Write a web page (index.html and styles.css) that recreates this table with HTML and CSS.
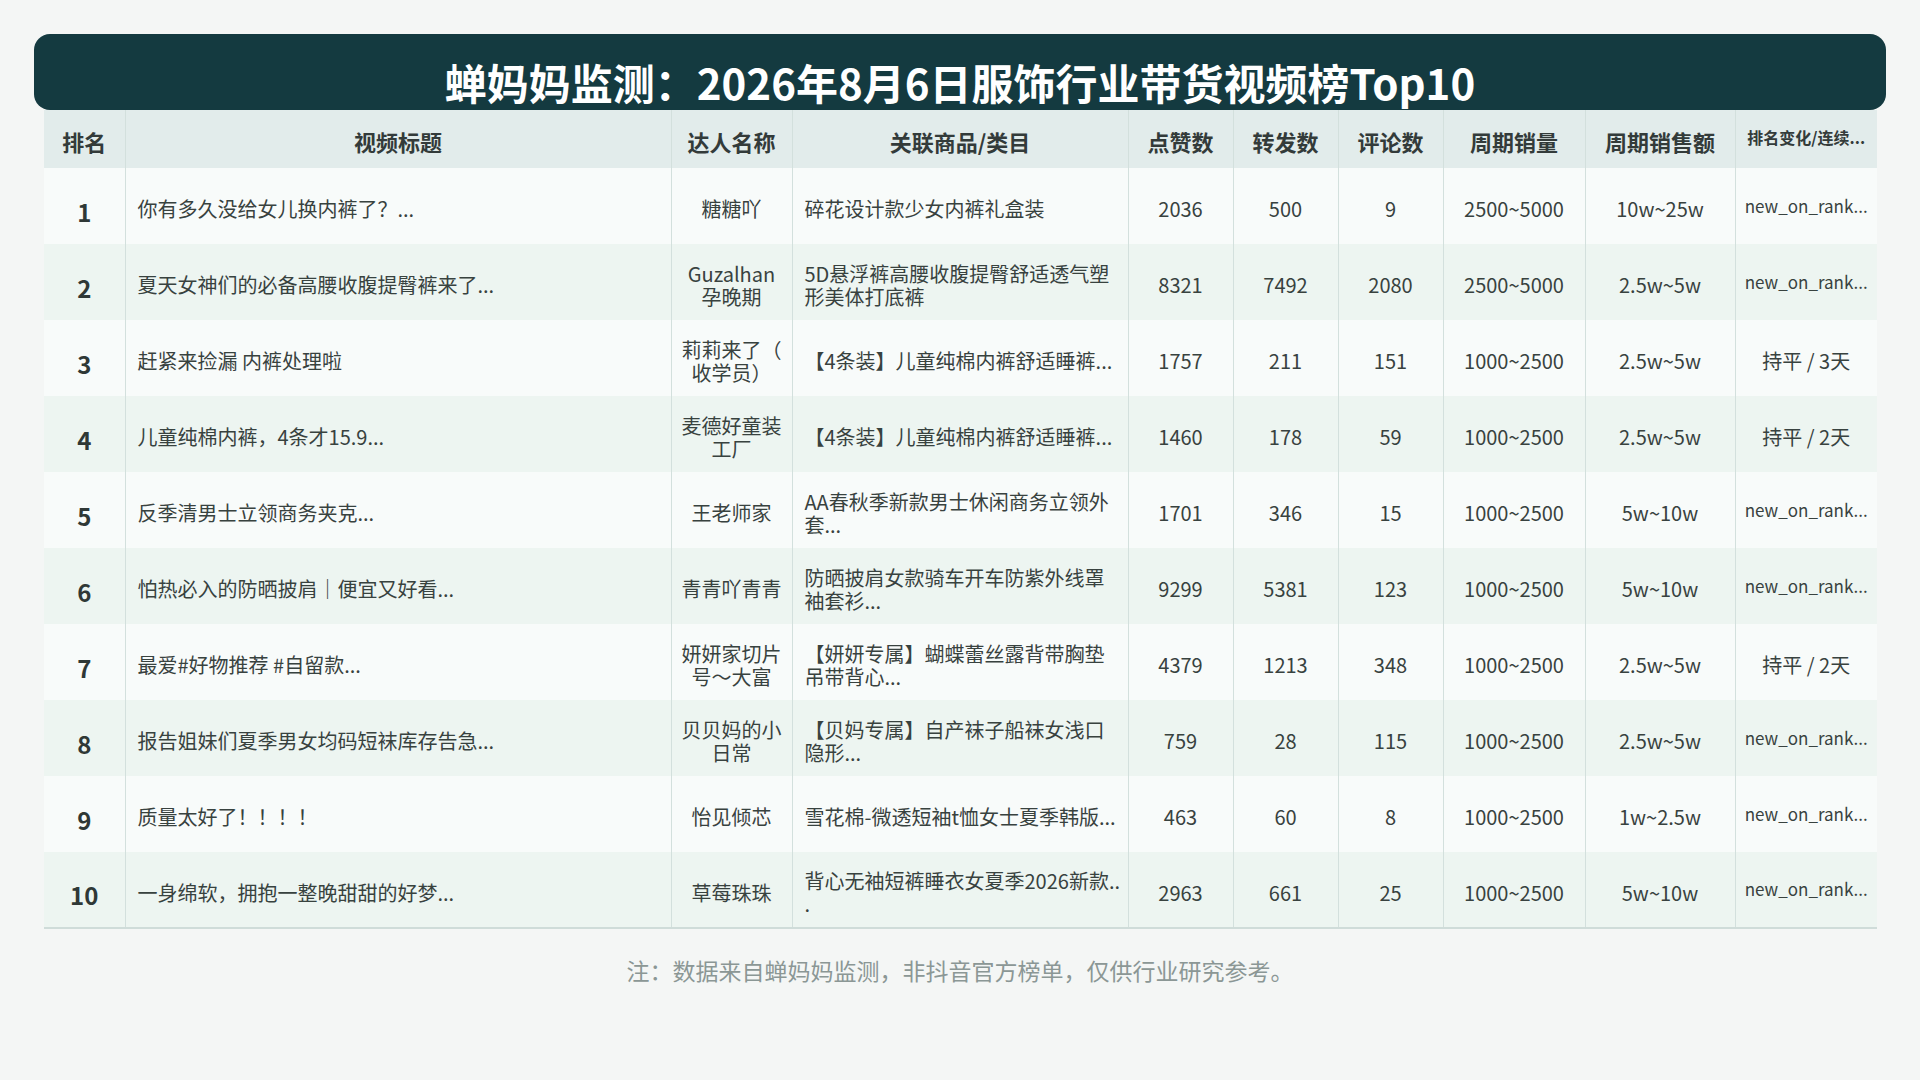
FILE: index.html
```html
<!DOCTYPE html>
<html lang="zh-CN">
<head>
<meta charset="utf-8">
<title>蝉妈妈监测：服饰行业带货视频榜Top10</title>
<link rel="stylesheet" href="styles.css">
</head>
<body>
<main class="page">
  <h1 class="title">蝉妈妈监测：2026年8月6日服饰行业带货视频榜Top10</h1>
  <table class="rank-table">
    <colgroup>
      <col class="c-rank"><col class="c-title"><col class="c-talent"><col class="c-goods">
      <col class="c-num"><col class="c-num"><col class="c-num"><col class="c-sales"><col class="c-amount"><col class="c-change">
    </colgroup>
    <thead>
      <tr>
        <th>排名</th><th>视频标题</th><th>达人名称</th><th>关联商品/类目</th><th>点赞数</th><th>转发数</th><th>评论数</th><th>周期销量</th><th>周期销售额</th><th class="th-small">排名变化/连续...</th>
      </tr>
    </thead>
    <tbody>
      <tr><td class="rank">1</td><td class="left">你有多久没给女儿换内裤了？...</td><td>糖糖吖</td><td class="left">碎花设计款少女内裤礼盒装</td><td>2036</td><td>500</td><td>9</td><td>2500~5000</td><td>10w~25w</td><td class="new">new_on_rank...</td></tr>
      <tr><td class="rank">2</td><td class="left">夏天女神们的必备高腰收腹提臀裤来了...</td><td>Guzalhan 孕晚期</td><td class="left">5D悬浮裤高腰收腹提臀舒适透气塑形美体打底裤</td><td>8321</td><td>7492</td><td>2080</td><td>2500~5000</td><td>2.5w~5w</td><td class="new">new_on_rank...</td></tr>
      <tr><td class="rank">3</td><td class="left">赶紧来捡漏 内裤处理啦</td><td>莉莉来了（收学员）</td><td class="left">【4条装】儿童纯棉内裤舒适睡裤...</td><td>1757</td><td>211</td><td>151</td><td>1000~2500</td><td>2.5w~5w</td><td>持平 / 3天</td></tr>
      <tr><td class="rank">4</td><td class="left">儿童纯棉内裤，4条才15.9...</td><td>麦德好童装工厂</td><td class="left">【4条装】儿童纯棉内裤舒适睡裤...</td><td>1460</td><td>178</td><td>59</td><td>1000~2500</td><td>2.5w~5w</td><td>持平 / 2天</td></tr>
      <tr><td class="rank">5</td><td class="left">反季清男士立领商务夹克...</td><td>王老师家</td><td class="left">AA春秋季新款男士休闲商务立领外套...</td><td>1701</td><td>346</td><td>15</td><td>1000~2500</td><td>5w~10w</td><td class="new">new_on_rank...</td></tr>
      <tr><td class="rank">6</td><td class="left">怕热必入的防晒披肩｜便宜又好看...</td><td>青青吖青青</td><td class="left">防晒披肩女款骑车开车防紫外线罩袖套衫...</td><td>9299</td><td>5381</td><td>123</td><td>1000~2500</td><td>5w~10w</td><td class="new">new_on_rank...</td></tr>
      <tr><td class="rank">7</td><td class="left">最爱#好物推荐 #自留款...</td><td>妍妍家切片号～大富</td><td class="left">【妍妍专属】蝴蝶蕾丝露背带胸垫吊带背心...</td><td>4379</td><td>1213</td><td>348</td><td>1000~2500</td><td>2.5w~5w</td><td>持平 / 2天</td></tr>
      <tr><td class="rank">8</td><td class="left">报告姐妹们夏季男女均码短袜库存告急...</td><td>贝贝妈的小日常</td><td class="left">【贝妈专属】自产袜子船袜女浅口隐形...</td><td>759</td><td>28</td><td>115</td><td>1000~2500</td><td>2.5w~5w</td><td class="new">new_on_rank...</td></tr>
      <tr><td class="rank">9</td><td class="left">质量太好了！！！！</td><td>怡见倾芯</td><td class="left">雪花棉-微透短袖t恤女士夏季韩版...</td><td>463</td><td>60</td><td>8</td><td>1000~2500</td><td>1w~2.5w</td><td class="new">new_on_rank...</td></tr>
      <tr><td class="rank">10</td><td class="left">一身绵软，拥抱一整晚甜甜的好梦...</td><td>草莓珠珠</td><td class="left">背心无袖短裤睡衣女夏季2026新款...</td><td>2963</td><td>661</td><td>25</td><td>1000~2500</td><td>5w~10w</td><td class="new">new_on_rank...</td></tr>
    </tbody>
  </table>
  <p class="note">注：数据来自蝉妈妈监测，非抖音官方榜单，仅供行业研究参考。</p>
</main>
</body>
</html>
```
FILE: styles.css
```css
html, body {
  margin: 0;
  padding: 0;
  background: #f4f6f5;
}
body {
  font-family: "Noto Sans CJK SC", "Noto Sans", sans-serif;
  color: #37413f;
}
.page {
  width: 1920px;
  height: 1080px;
  box-sizing: border-box;
  padding: 34px 34px 0;
}
.title {
  margin: 0;
  height: 76px;
  box-sizing: border-box;
  padding-top: 23px;
  background: #143a40;
  border-radius: 16px;
  color: #ffffff;
  font-size: 42px;
  font-weight: 700;
  line-height: 50px;
  text-align: center;
  white-space: nowrap;
}
.rank-table {
  margin: 0 10px;
  width: 1832px;
  table-layout: fixed;
  border-collapse: collapse;
  border-bottom: 2px solid #cfdcd9;
}
.c-rank { width: 81px; }
.c-title { width: 546px; }
.c-talent { width: 121px; }
.c-goods { width: 336px; }
.c-num { width: 105px; }
.c-sales { width: 142px; }
.c-amount { width: 150px; }
.c-change { width: 142px; }

.rank-table th,
.rank-table td {
  padding: 5px 10px 0;
  text-align: center;
  vertical-align: middle;
  border-left: 1px solid #d3e0dd;
  line-break: anywhere;
  overflow: hidden;
}
.rank-table th:first-child,
.rank-table td:first-child {
  border-left: none;
}
.rank-table thead tr {
  height: 58px;
  background: #e2eceb;
}
.rank-table th {
  font-size: 22px;
  font-weight: 700;
  color: #333b3a;
  line-height: 1.2;
  white-space: nowrap;
}
.rank-table th.th-small {
  font-size: 16px;
  padding-top: 0;
  padding-bottom: 2px;
}
.rank-table tbody tr {
  height: 76px;
  background: #f8fbfa;
}
.rank-table tbody tr:nth-child(even) {
  background: #edf5f1;
}
.rank-table td {
  font-size: 20px;
  line-height: 23px;
  color: #38423f;
}
.rank-table td.left {
  text-align: left;
  padding-left: 12px;
  padding-right: 6px;
}
.rank-table td.rank {
  font-size: 24px;
  font-weight: 700;
  color: #2f3836;
  padding-top: 10px;
}
.rank-table td.new {
  font-size: 17px;
  padding-top: 0;
  padding-bottom: 2px;
  white-space: nowrap;
  padding-left: 4px;
  padding-right: 4px;
}
.note {
  margin: 27px 0 0;
  text-align: center;
  font-size: 23px;
  line-height: 28px;
  color: #8b9795;
}
```
